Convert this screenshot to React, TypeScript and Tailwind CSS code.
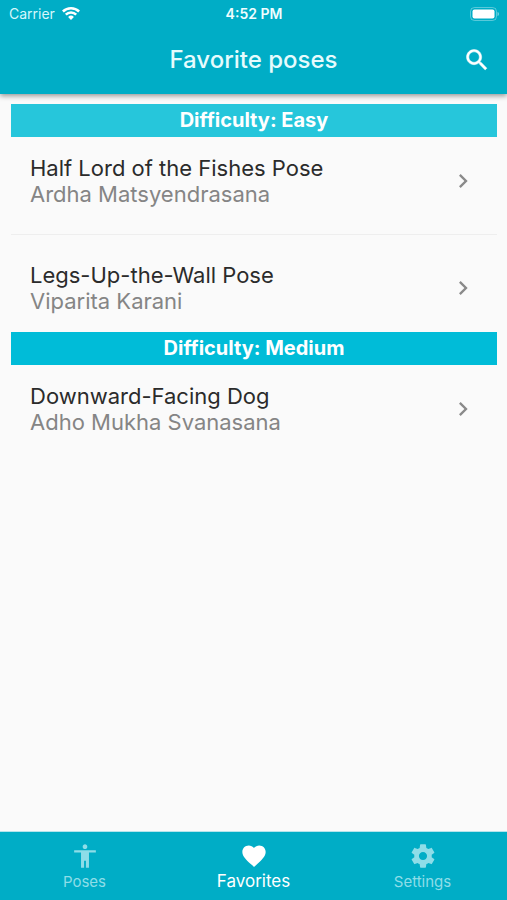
import React from "react";

type Pose = { name: string; sanskrit: string };
type Group = { title: string; band: string; poses: Pose[] };

const groups: Group[] = [
  {
    title: "Difficulty: Easy",
    band: "bg-[#26c6db]",
    poses: [
      { name: "Half Lord of the Fishes Pose", sanskrit: "Ardha Matsyendrasana" },
      { name: "Legs-Up-the-Wall Pose", sanskrit: "Viparita Karani" },
    ],
  },
  {
    title: "Difficulty: Medium",
    band: "bg-[#00bcd8]",
    poses: [{ name: "Downward-Facing Dog", sanskrit: "Adho Mukha Svanasana" }],
  },
];

const paths = {
  search:
    "M15.5 14h-.79l-.28-.27C15.41 12.59 16 11.11 16 9.5 16 5.91 13.09 3 9.5 3S3 5.91 3 9.5 5.91 16 9.5 16c1.61 0 3.09-.59 4.23-1.57l.27.28v.79l5 4.99L20.49 19l-4.99-5zm-6 0C7.01 14 5 11.99 5 9.5S7.01 5 9.5 5 14 7.01 14 9.5 11.99 14 9.5 14z",
  chevron: "M10 6L8.59 7.41 13.17 12l-4.58 4.59L10 18l6-6z",
  person:
    "M12 2c1.1 0 2 .9 2 2s-.9 2-2 2-2-.9-2-2 .9-2 2-2zm9.300 7h-5.900v13h-2.600v-6h-1.600v6H8.600V9H2.700V7h18.600v2z",
  heart:
    "M12 21.35l-1.45-1.32C5.4 15.36 2 12.28 2 8.5 2 5.42 4.42 3 7.5 3c1.74 0 3.41.81 4.5 2.09C13.09 3.81 14.76 3 16.5 3 19.58 3 22 5.42 22 8.5c0 3.78-3.4 6.86-8.55 11.54L12 21.35z",
  gear: "M19.43 12.98c.04-.32.07-.64.07-.98s-.03-.66-.07-.98l2.11-1.65c.19-.15.24-.42.12-.64l-2-3.46c-.12-.22-.39-.3-.61-.22l-2.49 1c-.52-.4-1.08-.73-1.69-.98l-.38-2.65C14.46 2.18 14.25 2 14 2h-4c-.25 0-.46.18-.49.42l-.38 2.65c-.61.25-1.17.59-1.69.98l-2.49-1c-.23-.09-.49 0-.61.22l-2 3.46c-.13.22-.07.49.12.64l2.11 1.65c-.04.32-.07.65-.07.98s.03.66.07.98l-2.11 1.65c-.19.15-.24.42-.12.64l2 3.46c.12.22.39.3.61.22l2.49-1c.52.4 1.08.73 1.69.98l.38 2.65c.03.24.24.42.49.42h4c.25 0 .46-.18.49-.42l.38-2.65c.61-.25 1.17-.59 1.69-.98l2.49 1c.23.09.49 0 .61-.22l2-3.46c.12-.22.07-.49-.12-.64l-2.11-1.65zM12 15.5c-1.93 0-3.5-1.57-3.5-3.5s1.57-3.5 3.5-3.5 3.5 1.57 3.5 3.5-1.57 3.5-3.5 3.5z",
};

function Icon({ name, className }: { name: keyof typeof paths; className: string }) {
  return (
    <svg viewBox="0 0 24 24" fill="currentColor" aria-hidden="true" className={className}>
      <path d={paths[name]} />
    </svg>
  );
}

function StatusBar() {
  return (
    <div className="grid h-7 grid-cols-3 items-center pr-2 pl-[9px] text-sm">
      <div className="flex items-center gap-[7px] text-[#d6f7fb]">
        <span>Carrier</span>
        <svg viewBox="0 0 18 14" className="-mt-0.5 h-[14px] w-[18px]" aria-hidden="true">
          <g fill="none" stroke="white" strokeWidth="2.5">
            <path d="M.9 5.500a11.500 11.500 0 0 1 16.200 0" />
            <path d="M3.800 8.700a7.300 7.300 0 0 1 10.400 0" />
          </g>
          <path d="M9 14 6.100 11a4.100 4.100 0 0 1 5.800 0z" fill="white" />
        </svg>
      </div>
      <div className="text-center font-semibold text-[#f0fdff]">4:52 PM</div>
      <svg viewBox="0 0 30 14" className="h-[14px] w-[30px] justify-self-end" aria-hidden="true">
        <rect x="1.5" y="0.5" width="26" height="13" rx="4" fill="none" stroke="white" strokeOpacity="0.35" />
        <rect x="3.500" y="2.500" width="22" height="9" rx="2" fill="white" />
        <path d="M28.500 5v4c1-.4 1.500-1.200 1.500-2s-.5-1.600-1.500-2z" fill="white" fillOpacity="0.45" />
      </svg>
    </div>
  );
}

const tabs: { label: string; icon: keyof typeof paths; active?: boolean }[] = [
  { label: "Poses", icon: "person" },
  { label: "Favorites", icon: "heart", active: true },
  { label: "Settings", icon: "gear" },
];

export default function App() {
  return (
    <div className="flex min-h-screen flex-col bg-[#fafafa] font-['Inter',sans-serif]">
      <header className="bg-[#00adc6] pb-0.5 text-white shadow-[0_2px_5px_rgba(0,0,0,0.4)]">
        <StatusBar />
        <div className="grid h-16 grid-cols-[1fr_auto_1fr] items-center px-4">
          <h1 className="col-start-2 text-2xl font-medium text-[#e6fbfd]">Favorite poses</h1>
          <button type="button" aria-label="Search" className="justify-self-end">
            <Icon name="search" className="size-7 stroke-current stroke-[0.4]" />
          </button>
        </div>
      </header>

      <main className="flex-1 pt-2.5 pr-2.5 pl-[11px]">
        {groups.map((group) => (
          <section key={group.title}>
            <h2 className={`${group.band} text-center text-xl leading-[33px] font-bold text-white`}>{group.title}</h2>
            <ul>
              {group.poses.map((pose, i) => (
                <li key={pose.name}>
                  {i > 0 && (
                    <div className="py-[9px]">
                      <hr className="border-[#eeeeee]" />
                    </div>
                  )}
                  <a href="#" className="flex h-[88px] items-center justify-between pr-5 pl-[19px]">
                    <span className="pb-px text-[22px] leading-[26px]">
                      <span className="block text-[#2b2b2b]">{pose.name}</span>
                      <span className="block text-[#858585]">{pose.sanskrit}</span>
                    </span>
                    <Icon name="chevron" className="size-7 text-[#8a8a8a]" />
                  </a>
                </li>
              ))}
            </ul>
          </section>
        ))}
      </main>

      <nav className="grid h-[69px] grid-cols-3 border-t border-[#b5e4ec] bg-[#00adc6]">
        {tabs.map((tab) => (
          <a
            key={tab.label}
            href="#"
            aria-current={tab.active ? "page" : undefined}
            className={`flex flex-col items-center pt-2.5 ${tab.active ? "text-[17px] leading-[22px] text-white" : "text-[15px] leading-6 text-[#8edde8]"}`}
          >
            <Icon name={tab.icon} className="size-7" />
            <span>{tab.label}</span>
          </a>
        ))}
      </nav>
    </div>
  );
}
